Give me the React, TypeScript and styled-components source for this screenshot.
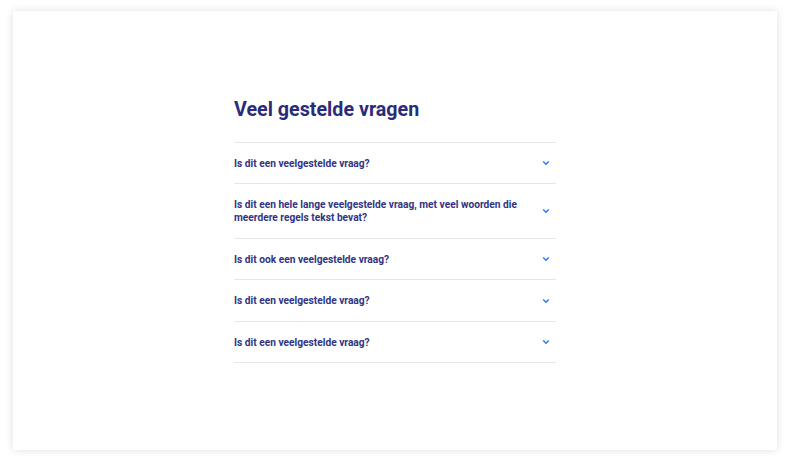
import React from "react";
import styled, { createGlobalStyle } from "styled-components";

const Global = createGlobalStyle`
  html, body { margin: 0; padding: 0; background: #ffffff; }
  body { font-family: Roboto, "Liberation Sans", Arial, sans-serif; }
  * { box-sizing: border-box; }
`;

const Page = styled.div`
  width: 790px;
  height: 465px;
  padding: 11px 13px 15px 13px;
  background: #ffffff;
`;

const Card = styled.div`
  width: 764px;
  height: 439px;
  background: #ffffff;
  box-shadow: 0 0 8px rgba(0, 0, 0, 0.13);
  display: flex;
  align-items: center;
  justify-content: center;
`;

const Section = styled.section`
  width: 322px;
  margin-top: 0;
`;

const Title = styled.h2`
  margin: 0 0 20px 0;
  font-size: 19.7px;
  line-height: 24px;
  font-weight: 700;
  color: #2b2c79;
`;

const List = styled.div`
  border-top: 1px solid #e6e6e6;
`;

const Item = styled.div`
  display: flex;
  align-items: center;
  justify-content: space-between;
  gap: 20px;
  padding: 14px 6px 13.5px 0;
  border-bottom: 1px solid #e6e6e6;
`;

const Question = styled.span`
  font-size: 10.2px;
  line-height: 13px;
  font-weight: 700;
  color: #323483;
  max-width: 290px;
`;

const Chevron = styled.svg`
  flex: none;
  width: 8px;
  height: 6px;
`;

const questions = [
  "Is dit een veelgestelde vraag?",
  "Is dit een hele lange veelgestelde vraag, met veel woorden die meerdere regels tekst bevat?",
  "Is dit ook een veelgestelde vraag?",
  "Is dit een veelgestelde vraag?",
  "Is dit een veelgestelde vraag?",
];

export default function App() {
  return (
    <>
      <Global />
      <Page>
        <Card>
          <Section>
            <Title>Veel gestelde vragen</Title>
            <List>
              {questions.map((q, i) => (
                <Item key={i}>
                  <Question>{q}</Question>
                  <Chevron viewBox="0 0 8 6">
                    <path d="M1.2 1.5 L4 4.3 L6.8 1.5" fill="none" stroke="#2f7cf0" strokeWidth="1.5" />
                  </Chevron>
                </Item>
              ))}
            </List>
          </Section>
        </Card>
      </Page>
    </>
  );
}
